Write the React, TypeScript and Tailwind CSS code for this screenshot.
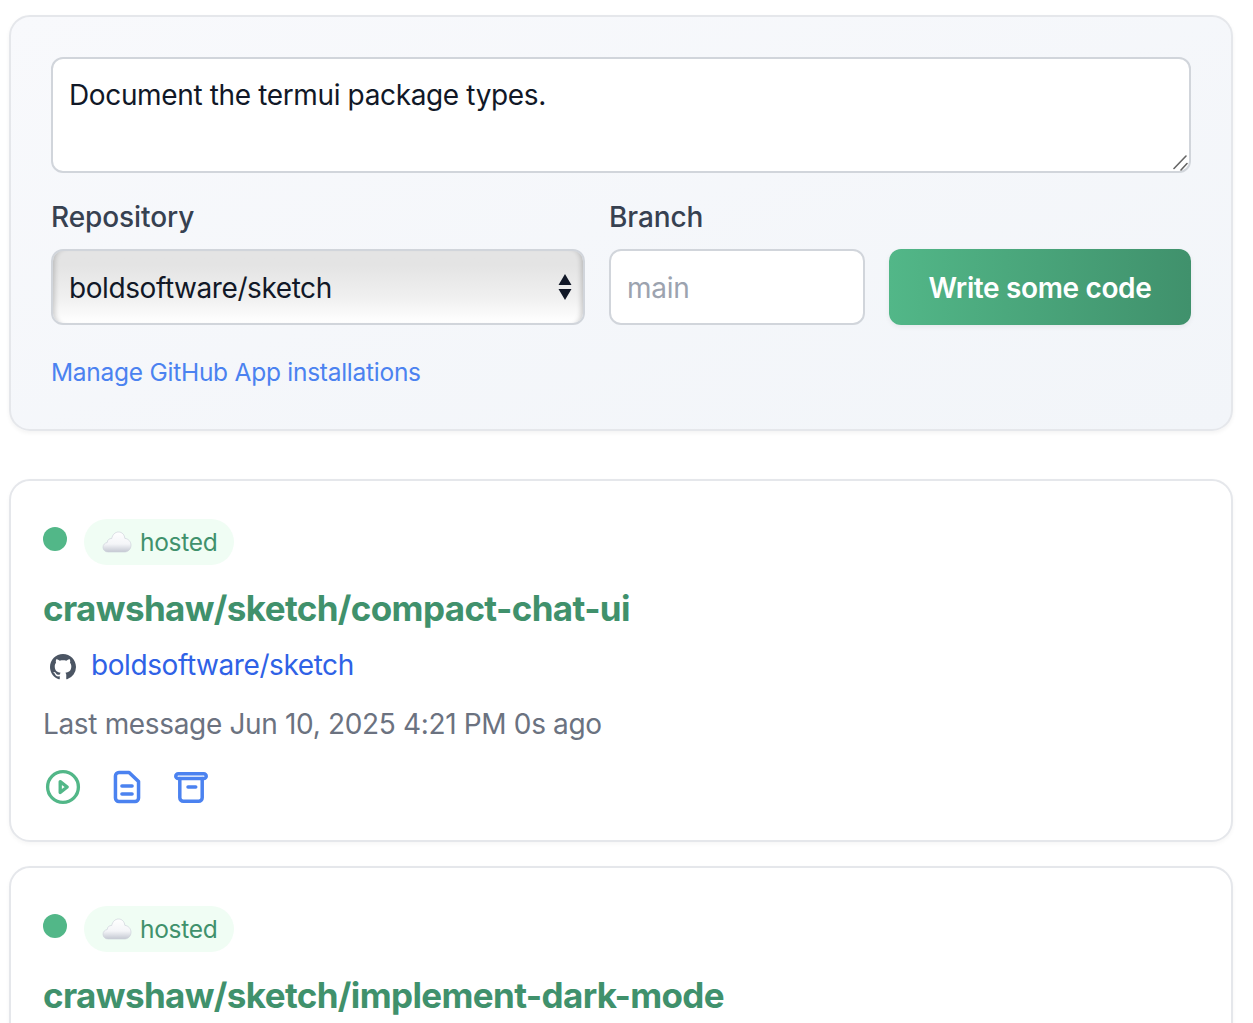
import React from "react";

const font = { fontFamily: "Inter, 'Noto Sans', sans-serif" };

function Cloud({ id }: { id: string }) {
  return (
    <svg width="30" height="22" viewBox="0 0 30 22" className="shrink-0">
      <defs>
        <linearGradient id={id} x1="0" y1="0" x2="0" y2="1">
          <stop offset="0" stopColor="#ffffff" />
          <stop offset="0.6" stopColor="#f4f5f8" />
          <stop offset="1" stopColor="#c4c8d2" />
        </linearGradient>
      </defs>
      <path
        d="M6.500 21C3 21 1 18.800 1 16.200c0-2.500 1.800-4.300 4.200-4.700C5.300 9 7.300 7.300 9.700 7.500 10.500 3.500 13.300 1 16.500 1c3.400 0 6 2.500 6.300 6.300 3.700.6 6.200 3.300 6.200 6.900 0 4-2.900 6.800-6.800 6.800H6.500z"
        fill={`url(#${id})`}
        stroke="#cfd2db"
        strokeWidth="0.7"
      />
    </svg>
  );
}

function GitHubMark() {
  return (
    <svg width="26" height="26" viewBox="0 0 16 16" fill="#4b5563" className="mt-[4px] shrink-0">
      <path d="M8 0C3.580 0 0 3.580 0 8c0 3.540 2.290 6.530 5.470 7.590.4.070.55-.17.55-.38 0-.19-.01-.82-.01-1.490-2.010.37-2.530-.49-2.690-.94-.09-.23-.48-.94-.82-1.130-.28-.15-.68-.52-.01-.53.63-.01 1.080.58 1.230.82.720 1.210 1.870.87 2.330.66.070-.52.280-.87.510-1.070-1.780-.2-3.640-.89-3.640-3.950 0-.87.310-1.590.820-2.150-.080-.2-.360-1.020.080-2.120 0 0 .670-.210 2.200.820.640-.180 1.320-.270 2-.270s1.360.090 2 .270c1.530-1.040 2.200-.820 2.200-.820.440 1.100.160 1.920.080 2.120.510.560.820 1.270.820 2.150 0 3.070-1.870 3.750-3.650 3.950.290.250.540.730.540 1.480 0 1.070-.010 1.930-.010 2.200 0 .210.150.460.550.380A8.013 8.013 0 0 0 16 8c0-4.420-3.580-8-8-8z" />
    </svg>
  );
}

function PlayIcon() {
  return (
    <svg width="42" height="42" viewBox="0 0 24 24" fill="none" stroke="#52b788" strokeWidth="1.9" strokeLinecap="round" strokeLinejoin="round">
      <circle cx="12" cy="12" r="8.800" />
      <path d="M10.400 8.900l4 3.100-4 3.100V8.900z" />
    </svg>
  );
}

function FileIcon() {
  return (
    <svg width="42" height="42" viewBox="0 0 24 24" fill="none" stroke="#4b82f0" strokeWidth="2" strokeLinecap="round" strokeLinejoin="round">
      <path d="M7.400 3.700h5.800l5.400 5.200v9.400a2 2 0 0 1-2 2H7.400a2 2 0 0 1-2-2V5.700a2 2 0 0 1 2-2z" />
      <path d="M9.100 11.400h5.800M9.100 16h5.800" />
    </svg>
  );
}

function ArchiveIcon() {
  return (
    <svg width="42" height="42" viewBox="0 0 24 24" fill="none" stroke="#4b82f0" strokeWidth="2" strokeLinecap="round" strokeLinejoin="round">
      <rect x="3.300" y="4.400" width="17.400" height="2.800" rx="1.400" />
      <path d="M5.600 7.200v10.900a2 2 0 0 0 2 2h8.800a2 2 0 0 0 2-2V7.200" />
      <path d="M10.300 12h4.400" />
    </svg>
  );
}

function SessionCard({ title, id, full }: { title: string; id: string; full?: boolean }) {
  return (
    <div className="rounded-[21px] border-2 border-[#e5e7eb] bg-white px-[32px] pt-[38px] pb-[32px] shadow-[0_2px_4px_rgba(0,0,0,0.04)]">
      <div className="flex items-start gap-[17px]">
        <span className="mt-[8px] h-[24px] w-[24px] rounded-full bg-[#52b788]" />
        <span className="flex h-[46px] w-[150px] items-center gap-[8px] rounded-full bg-[#f0fdf4] pl-[18px] text-[24.500px] tracking-[-0.3px] text-[#40916c]">
          <Cloud id={id} />
          hosted
        </span>
      </div>
      <h2 className="mt-[19px] text-[35px] leading-[49px] font-bold tracking-[-0.63px] text-[#40916c]">{title}</h2>
      {full && (
        <>
          <div className="mt-[13px] flex items-center gap-[15px] pl-[7px]">
            <GitHubMark />
            <a className="text-[28px] leading-[38px] tracking-[-0.42px] text-[#2f62e6]">boldsoftware/sketch</a>
          </div>
          <p className="mt-[21px] text-[28px] leading-[38px] tracking-[-0.34px] text-[#6b7280]">Last message Jun 10, 2025 4:21 PM 0s ago</p>
          <div className="mt-[23px] -ml-[1px] flex items-center gap-[22px]">
            <PlayIcon />
            <FileIcon />
            <ArchiveIcon />
          </div>
        </>
      )}
    </div>
  );
}

export default function App() {
  return (
    <div className="h-[1023px] overflow-hidden bg-white pt-[15px] pr-[20px] pl-[9px]" style={font}>
      <div className="rounded-[21px] border-2 border-[#e5e7eb] bg-gradient-to-br from-[#f8f9fc] to-[#f2f5f9] p-[40px] shadow-[0_2px_4px_rgba(0,0,0,0.05)]">
        <div className="relative">
          <textarea
            defaultValue="Document the termui package types."
            className="block h-[116px] w-full resize-none rounded-[12px] border-2 border-[#d1d5db] bg-white px-[16px] pt-[17px] pb-[11px] text-[28px] leading-[38px] tracking-[-0.36px] text-[#111827] outline-none"
          />
          <svg width="16" height="16" viewBox="0 0 16 16" className="absolute right-[3px] bottom-[2px]" stroke="#666666" strokeWidth="1.600" strokeLinecap="round">
            <path d="M2 13.500L14 1M9 15l6-6.500" />
          </svg>
        </div>
        <div className="mt-[26px] flex items-end gap-[24px]">
          <div className="flex w-[534px] flex-col">
            <label className="text-[28px] leading-[36px] font-medium tracking-[-0.08px] text-[#374151]">Repository</label>
            <div className="relative mt-[14px] flex h-[76px] items-center rounded-[12px] border-2 border-[#d1d5db] bg-gradient-to-b from-[#e4e4e4] from-20% via-[#f0f0f0] via-65% to-[#ffffff] px-[16px] pt-[2px] shadow-[inset_6px_0_5px_-4px_rgba(0,0,0,0.18),inset_-6px_0_5px_-4px_rgba(0,0,0,0.18)]">
              <select className="w-full appearance-none bg-transparent text-[28px] leading-[38px] tracking-[-0.42px] text-[#111827] outline-none">
                <option>boldsoftware/sketch</option>
              </select>
              <svg width="14" height="26" viewBox="0 0 14 26" className="absolute top-[23px] right-[11px]" fill="#111827">
                <path d="M7 0l6.500 11H.5L7 0zM7 26L.5 15h13L7 26z" />
              </svg>
            </div>
          </div>
          <div className="flex w-[256px] flex-col">
            <label className="text-[28px] leading-[36px] font-medium tracking-[-0.08px] text-[#374151]">Branch</label>
            <input
              placeholder="main"
              className="mt-[14px] h-[76px] w-full rounded-[12px] border-2 border-[#d1d5db] bg-white px-[16px] pt-[2px] text-[28px] tracking-[-0.3px] text-[#111827] outline-none placeholder:text-[#9ca3af]"
            />
          </div>
          <button className="h-[76px] w-[302px] rounded-[12px] bg-gradient-to-r from-[#52b788] to-[#40916c] pt-[1px] text-[28px] font-semibold tracking-[-0.36px] text-white shadow-[0_2px_5px_rgba(0,0,0,0.06)]">
            Write some code
          </button>
        </div>
        <a className="mt-[30px] block text-[24.500px] leading-[34px] tracking-[-0.26px] text-[#4b82f0]">Manage GitHub App installations</a>
      </div>
      <div className="mt-[48px] flex flex-col gap-[24px]">
        <SessionCard title="crawshaw/sketch/compact-chat-ui" id="cloud-a" full />
        <SessionCard title="crawshaw/sketch/implement-dark-mode" id="cloud-b" />
      </div>
    </div>
  );
}
